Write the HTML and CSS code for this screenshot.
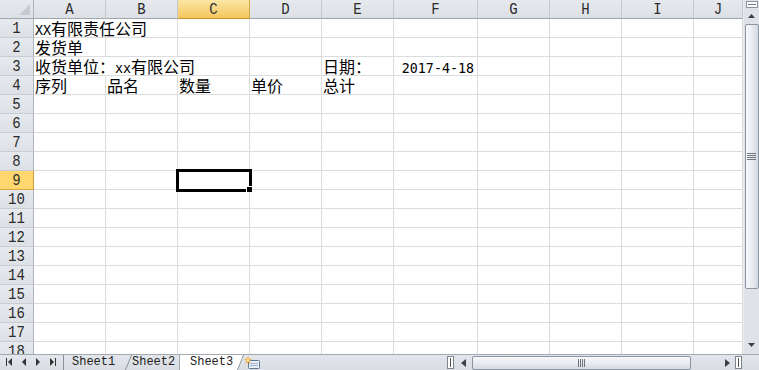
FILE: index.html
```html
<!DOCTYPE html>
<html lang="zh-CN">
<head>
    <meta charset="UTF-8">
    <title>发货单 - Sheet3</title>
    <link rel="stylesheet" href="styles.css">
</head>
<body>
    <div class="window">
        <!-- Feuille de calcul -->
        <div class="sheet">
            <div class="grid" id="grid"></div>
        </div>

        <!-- Barre de défilement verticale -->
        <div class="vscroll">
            <div class="split-v"></div>
            <svg class="arrow up" width="7" height="4" viewBox="0 0 7 4"><polygon points="0,4 7,4 3.5,0" fill="#3c3f44"/></svg>
            <div class="vthumb">
                <svg width="9" height="7" viewBox="0 0 9 7">
                    <rect x="0" y="0" width="9" height="1" fill="#6f7680"/>
                    <rect x="0" y="2" width="9" height="1" fill="#6f7680"/>
                    <rect x="0" y="4" width="9" height="1" fill="#6f7680"/>
                    <rect x="0" y="6" width="9" height="1" fill="#6f7680"/>
                </svg>
            </div>
            <div class="vtrack"></div>
            <svg class="arrow down" width="7" height="4" viewBox="0 0 7 4"><polygon points="0,0 7,0 3.5,4" fill="#3c3f44"/></svg>
        </div>

        <!-- Onglets et barre horizontale -->
        <div class="tabbar">
            <div class="nav">
                <svg width="63" height="15" viewBox="0 0 63 15">
                    <rect x="6" y="3" width="1" height="8" fill="#333"/>
                    <polygon points="12,3 12,11 8,7" fill="#333"/>
                    <polygon points="26,3 26,11 22,7" fill="#333"/>
                    <polygon points="36,3 36,11 40,7" fill="#333"/>
                    <polygon points="50,3 50,11 54,7" fill="#333"/>
                    <rect x="55" y="3" width="1" height="8" fill="#333"/>
                </svg>
            </div>
            <div class="tabs">
                <div class="tab first">Sheet1</div>
                <div class="tab">Sheet2</div>
                <div class="tab active">Sheet3</div>
                <div class="newsheet">
                    <svg width="18" height="14" viewBox="0 0 18 14">
                        <rect x="4.5" y="4.5" width="11" height="8" rx="1" fill="#e9eff8" stroke="#5f7896"/>
                        <rect x="6" y="7" width="8" height="1" fill="#9fb3cc"/>
                        <rect x="6" y="9" width="8" height="1" fill="#9fb3cc"/>
                        <polygon points="4,0 5,3 8,3 5.5,5 6.5,8 4,6 1.5,8 2.5,5 0,3 3,3" fill="#f7a21b"/>
                        <circle cx="4" cy="4.2" r="1.2" fill="#fff4c0"/>
                    </svg>
                </div>
            </div>
            <div class="fill"></div>
            <div class="split-h"></div>
            <div class="hscroll">
                <div class="harrow">
                    <svg width="5" height="8" viewBox="0 0 5 8"><polygon points="5,0 5,8 0,4" fill="#3c3f44"/></svg>
                </div>
                <div class="hthumb">
                    <svg width="7" height="8" viewBox="0 0 7 8">
                        <rect x="0" y="0" width="1" height="8" fill="#6f7680"/>
                        <rect x="2" y="0" width="1" height="8" fill="#6f7680"/>
                        <rect x="4" y="0" width="1" height="8" fill="#6f7680"/>
                        <rect x="6" y="0" width="1" height="8" fill="#6f7680"/>
                    </svg>
                </div>
                <div class="htrack"></div>
                <div class="harrow">
                    <svg width="5" height="8" viewBox="0 0 5 8"><polygon points="0,0 0,8 5,4" fill="#3c3f44"/></svg>
                </div>
                <div class="split-r"></div>
            </div>
            <div class="corner"></div>
        </div>
    </div>

    <script>
        // Colonnes et contenu des cellules
        const colonnes = ["A", "B", "C", "D", "E", "F", "G", "H", "I", "J"];
        const cellules = {
            A1: "XX有限责任公司",
            A2: "发货单",
            A3: "收货单位：xx有限公司",
            E3: "日期：",
            F3: "2017-4-18",
            A4: "序列",
            B4: "品名",
            C4: "数量",
            D4: "单价",
            E4: "总计"
        };
        const alignDroite = ["F3"];
        const debordement = ["A1", "A3", "B3"]; // le texte déborde : pas de trait
        const colActive = "C";
        const ligneActive = 9;

        // Les caractères latins dans une police à chasse fixe
        function latin(texte) {
            return texte.replace(/[\x21-\x7e]+/g, m => `<span class="lat">${m}</span>`);
        }

        function afficherGrille() {
            const grid = document.getElementById("grid");
            let html = `<div class="ch corner-tl"></div>`;

            colonnes.forEach(c => {
                html += `<div class="ch${c === colActive ? " on" : ""}"><span>${c}</span></div>`;
            });

            for (let r = 1; r <= 18; r++) {
                html += `<div class="rh${r === ligneActive ? " on" : ""}"><span>${r}</span></div>`;
                colonnes.forEach(c => {
                    const ref = c + r;
                    let cls = "c";
                    if (alignDroite.includes(ref)) cls += " right";
                    if (debordement.includes(ref)) cls += " open";
                    if (c === colActive && r === ligneActive) cls += " sel";
                    html += `<div class="${cls}">${latin(cellules[ref] || "")}</div>`;
                });
            }
            grid.innerHTML = html;
        }

        afficherGrille();
    </script>
</body>
</html>
```

FILE: styles.css
```css
body {
    margin: 0;
    width: 759px;
    height: 370px;
    overflow: hidden;
    background: #fff;
    font-family: "Noto Sans CJK SC", sans-serif;
}

.window {
    display: grid;
    grid-template-columns: 743px 16px;
    grid-template-rows: 354px 16px;
    width: 759px;
    height: 370px;
}

/* ---- Feuille ---- */

.sheet {
    overflow: hidden;
}

.grid {
    display: grid;
    grid-template-columns: 34px repeat(5, 72px) 84px repeat(3, 72px) 49px;
    grid-auto-rows: 19px;
}

.c {
    box-sizing: border-box;
    border-right: 1px solid #dadcdd;
    border-bottom: 1px solid #dadcdd;
    padding-left: 1px;
    font-size: 16px;
    line-height: 18px;
    white-space: nowrap;
    color: #000;
}

.c.open {
    border-right-color: transparent;
}

.c.right {
    text-align: right;
    padding-right: 3px;
}

.c.sel {
    position: relative;
    z-index: 1;
    outline: 3px solid #000;
    outline-offset: -1px;
}

.c.sel::after {
    content: "";
    position: absolute;
    right: -3px;
    bottom: -3px;
    width: 5px;
    height: 5px;
    background: #000;
    border: 1px solid #fff;
    border-right: none;
    border-bottom: none;
}

.lat {
    font-family: "DejaVu Sans Mono", monospace;
    font-size: 13.33px;
}

.ch, .rh {
    box-sizing: border-box;
    background: linear-gradient(#e6e9ed, #dde1e6);
    color: #2b2b2b;
    font-family: "Liberation Mono", monospace;
    font-size: 14px;
    text-align: center;
}

.ch span, .rh span {
    display: inline-block;
    transform: scaleY(1.2);
}

.ch {
    border-right: 1px solid #c3c8ce;
    border-bottom: 1px solid #9ea5ad;
    line-height: 19px;
}

.rh {
    border-right: 1px solid #aeb4bc;
    border-bottom: 1px solid #c8cdd3;
    line-height: 19px;
}

.ch.on {
    background: linear-gradient(#fbe6a6, #f5c75c);
    border-right-color: #d9a44a;
    border-bottom-color: #c98d32;
    color: #333;
}

.rh.on {
    background: #fed86e;
    border-bottom-color: #e0a43f;
    border-right-color: #d29a3e;
    color: #333;
}

.corner-tl {
    position: relative;
    border-right-color: #aeb4bc;
}

.corner-tl::after {
    content: "";
    position: absolute;
    right: 3px;
    bottom: 3px;
    border-left: 11px solid transparent;
    border-bottom: 11px solid #c6cad0;
}

/* ---- Défilement vertical ---- */

.vscroll {
    display: flex;
    flex-direction: column;
    align-items: center;
    background: #dfe3e9;
    border-left: 1px solid #e9ecf0;
    box-sizing: border-box;
}

.split-v {
    box-sizing: border-box;
    width: 12px;
    height: 7px;
    margin-top: 1px;
    border: 1px solid #8d949e;
    background: #fff;
    display: flex;
    align-items: center;
    justify-content: center;
}

.split-v::after {
    content: "";
    width: 8px;
    height: 1px;
    background: #6f7680;
}

.arrow.up {
    margin-top: 6px;
}

.vthumb {
    box-sizing: border-box;
    margin-top: 6px;
    width: 14px;
    height: 265px;
    border: 1px solid #8c95a2;
    border-radius: 2px;
    background: linear-gradient(to right, #f7f8fa, #e6e9ee 60%, #d4d9e0);
    display: flex;
    align-items: center;
    justify-content: center;
}

.vtrack {
    flex: 1;
}

.arrow.down {
    margin-bottom: 7px;
}

/* ---- Onglets ---- */

.tabbar {
    grid-column: 1 / 3;
    display: flex;
    box-sizing: border-box;
    height: 16px;
    border-top: 1px solid #a3a9b1;
    background: linear-gradient(#e3e6eb, #d9dde3);
}

.nav {
    width: 63px;
    flex-shrink: 0;
}

.nav svg {
    display: block;
}

.tabs {
    display: flex;
}

.tab {
    position: relative;
    box-sizing: border-box;
    height: 15px;
    padding-left: 7px;
    font-family: "Liberation Mono", monospace;
    font-size: 12px;
    line-height: 15px;
    color: #222;
}

.tab::after {
    content: "";
    position: absolute;
    top: 0;
    bottom: 0;
    left: calc(100% - 7px);
    width: 7px;
    border-right: 1px solid #8a929c;
    transform: skewX(-22deg);
    transform-origin: bottom left;
}

.tab.first {
    width: 62px;
    padding-left: 8px;
    border-left: 1px solid #8a929c;
}

.tab:nth-child(2) {
    width: 54px;
}

.tab.active {
    width: 58px;
    padding-left: 10px;
    background: #fff;
    border-left: 1px solid #a0a7b0;
}

.tab.active::after {
    background: #fff;
}

.newsheet {
    margin-left: 7px;
    padding-top: 1px;
}

.newsheet svg {
    display: block;
}

.fill {
    flex: 1;
}

.split-h {
    box-sizing: border-box;
    width: 7px;
    height: 13px;
    margin: 1px 1px 0 0;
    border: 1px solid #7d848e;
    background: #fff;
    display: flex;
    justify-content: center;
    align-items: center;
}

.split-h::after {
    content: "";
    width: 1px;
    height: 9px;
    background: #555;
}

.hscroll {
    display: flex;
    align-items: center;
    width: 288px;
}

.harrow {
    width: 16px;
    display: flex;
    justify-content: center;
}

.hthumb {
    box-sizing: border-box;
    width: 219px;
    height: 14px;
    margin-left: 1px;
    border: 1px solid #8c95a2;
    border-radius: 2px;
    background: linear-gradient(#f7f8fa, #e6e9ee 60%, #d4d9e0);
    display: flex;
    align-items: center;
    justify-content: center;
}

.htrack {
    flex: 1;
}

.split-r {
    box-sizing: border-box;
    width: 7px;
    height: 13px;
    margin-right: 1px;
    border: 1px solid #7d848e;
    background: #fff;
    display: flex;
    justify-content: center;
    align-items: center;
}

.split-r::after {
    content: "";
    width: 1px;
    height: 9px;
    background: #555;
}

.corner {
    width: 16px;
}
```
